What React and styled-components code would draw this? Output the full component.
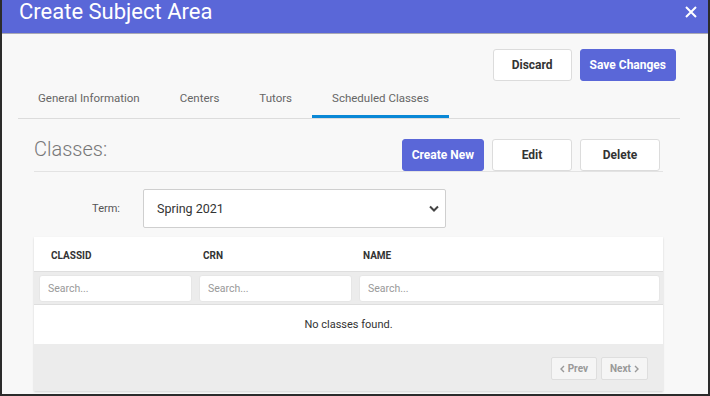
import React from 'react';
import styled, { createGlobalStyle } from 'styled-components';

const GlobalStyle = createGlobalStyle`
    html, body {
        margin: 0;
        padding: 0;
        background: #fff;
        font-family: Roboto, "Liberation Sans", Arial, sans-serif;
    }
    * { box-sizing: border-box; }
`;

const Window = styled.div`
    width: 710px;
    height: 396px;
    overflow: hidden;
    border: 2px solid #2b2b2b;
    border-top: 0;
    background: #f8f8f8;
    display: flex;
    flex-direction: column;
`;

const Header = styled.div`
    height: 34px;
    flex-shrink: 0;
    background: #5a67d8;
    border-bottom: 1px solid #a9a9b4;
    display: flex;
    justify-content: space-between;
    align-items: flex-start;
    padding: 0 11px 0 17px;
`;

const Title = styled.h1`
    margin: 0;
    font-size: 22px;
    line-height: 24px;
    font-weight: 400;
    color: #fff;
`;

const Close = styled.button`
    margin-top: 6px;
    width: 12px;
    height: 12px;
    padding: 0;
    border: 0;
    background: none;
    cursor: pointer;
    display: flex;
`;

const Body = styled.div`
    padding: 0 28px 0 16px;
`;

const Actions = styled.div`
    display: flex;
    justify-content: flex-end;
    gap: 8px;
    margin: 15px 4px 0 0;
`;

const Button = styled.button`
    height: 32px;
    min-width: ${props => props.width || 79}px;
    padding: 0 9px;
    border-radius: 3px;
    border: 1px solid ${props => (props.primary ? '#5a67d8' : '#dcdcdc')};
    background: ${props => (props.primary ? '#5a67d8' : '#fff')};
    color: ${props => (props.primary ? '#fff' : '#333')};
    font-family: Roboto, "Liberation Sans", Arial, sans-serif;
    font-size: 12px;
    font-weight: 700;
    cursor: pointer;
`;

const Tabs = styled.div`
    display: flex;
    border-bottom: 1px solid #dcdcdc;
`;

const Tab = styled.div`
    padding: 10px 20px 9px;
    font-size: 11.5px;
    line-height: 15px;
    color: #666;
    border-bottom: 3px solid ${props => (props.active ? '#0a88d6' : 'transparent')};
    cursor: pointer;
`;

const Panel = styled.div`
    margin: 0 17px 0 16px;
`;

const PanelHead = styled.div`
    display: flex;
    align-items: flex-end;
    padding-top: 20px;
    padding-right: 3px;
    border-bottom: 1px solid #e3e3e3;
`;

const PanelTitle = styled.h2`
    margin: 0 auto 12px 0;
    font-size: 20px;
    line-height: 20px;
    font-weight: 300;
    color: #777;
`;

const PanelButtons = styled.div`
    display: flex;
    gap: 8px;
`;

const TermRow = styled.div`
    display: flex;
    align-items: center;
    margin-top: 17px;
`;

const Label = styled.label`
    width: 109px;
    padding-right: 23px;
    text-align: right;
    font-size: 11px;
    color: #555;
`;

const Select = styled.div`
    width: 303px;
    height: 39px;
    display: flex;
    align-items: center;
    justify-content: space-between;
    padding: 0 6px 0 13px;
    background: #fff;
    border: 1px solid #cfcfcf;
    border-radius: 2px;
    font-size: 12.5px;
    color: #333;
`;

const Card = styled.div`
    margin-top: 9px;
    background: #fff;
    box-shadow: 0 1px 2px rgba(0, 0, 0, 0.15);
`;

const HeadRow = styled.div`
    display: grid;
    grid-template-columns: 152px 160px 1fr;
    height: 35px;
    padding: 2px 0 0 17px;
    align-items: center;
    border-bottom: 1px solid #dedede;
    font-size: 10px;
    font-weight: 700;
    color: #333;
`;

const FilterRow = styled.div`
    display: grid;
    grid-template-columns: 153px 153px 1fr;
    column-gap: 7px;
    padding: 3px 3px 2px 5px;
    background: #ececec;
    border-bottom: 1px solid #dedede;
`;

const Search = styled.input`
    height: 27px;
    width: 100%;
    padding: 0 8px;
    border: 1px solid #e6e6e6;
    border-radius: 3px;
    background: #fff;
    font-family: Roboto, "Liberation Sans", Arial, sans-serif;
    font-size: 10.5px;
    color: #333;
    outline: none;
    &::placeholder { color: #999; }
`;

const Empty = styled.div`
    height: 39px;
    display: flex;
    align-items: center;
    justify-content: center;
    font-size: 11px;
    color: #333;
`;

const Footer = styled.div`
    height: 47px;
    background: #ececec;
    display: flex;
    justify-content: flex-end;
    align-items: flex-start;
    gap: 4px;
    padding: 13px 15px 0 0;
`;

const PageButton = styled.button`
    height: 23px;
    display: flex;
    align-items: center;
    gap: 3px;
    padding: 0 8px;
    border: 1px solid #dedede;
    border-radius: 2px;
    background: #f5f5f5;
    color: #999;
    font-family: Roboto, "Liberation Sans", Arial, sans-serif;
    font-size: 10px;
    font-weight: 700;
`;

const Chevron = ({ dir }) => (
    <svg width="5" height="8" viewBox="0 0 5 8">
        <path
            d={dir === 'left' ? 'M4 1L1 4l3 3' : 'M1 1l3 3-3 3'}
            fill="none"
            stroke="#999"
            strokeWidth="1.4"
        />
    </svg>
);

const tabs = ['General Information', 'Centers', 'Tutors', 'Scheduled Classes'];

export default function App() {
    return (
        <>
            <GlobalStyle />
            <Window>
                <Header>
                    <Title>Create Subject Area</Title>
                    <Close aria-label="Close">
                        <svg width="12" height="12" viewBox="0 0 12 12">
                            <path d="M1 1l10 10M11 1L1 11" stroke="#fff" strokeWidth="2" />
                        </svg>
                    </Close>
                </Header>
                <Body>
                    <Actions>
                        <Button>Discard</Button>
                        <Button primary>Save Changes</Button>
                    </Actions>
                    <Tabs>
                        {tabs.map(t => (
                            <Tab key={t} active={t === 'Scheduled Classes'}>{t}</Tab>
                        ))}
                    </Tabs>
                    <Panel>
                        <PanelHead>
                            <PanelTitle>Classes:</PanelTitle>
                            <PanelButtons>
                                <Button primary>Create New</Button>
                                <Button width={80}>Edit</Button>
                                <Button width={80}>Delete</Button>
                            </PanelButtons>
                        </PanelHead>
                        <TermRow>
                            <Label>Term:</Label>
                            <Select>
                                <span>Spring 2021</span>
                                <svg width="10" height="7" viewBox="0 0 10 7">
                                    <path d="M1 1.5l4 4 4-4" fill="none" stroke="#444" strokeWidth="2" />
                                </svg>
                            </Select>
                        </TermRow>
                        <Card>
                            <HeadRow>
                                <span>CLASSID</span>
                                <span>CRN</span>
                                <span>NAME</span>
                            </HeadRow>
                            <FilterRow>
                                <Search placeholder="Search..." />
                                <Search placeholder="Search..." />
                                <Search placeholder="Search..." />
                            </FilterRow>
                            <Empty>No classes found.</Empty>
                            <Footer>
                                <PageButton><Chevron dir="left" />Prev</PageButton>
                                <PageButton>Next<Chevron dir="right" /></PageButton>
                            </Footer>
                        </Card>
                    </Panel>
                </Body>
            </Window>
        </>
    );
}
